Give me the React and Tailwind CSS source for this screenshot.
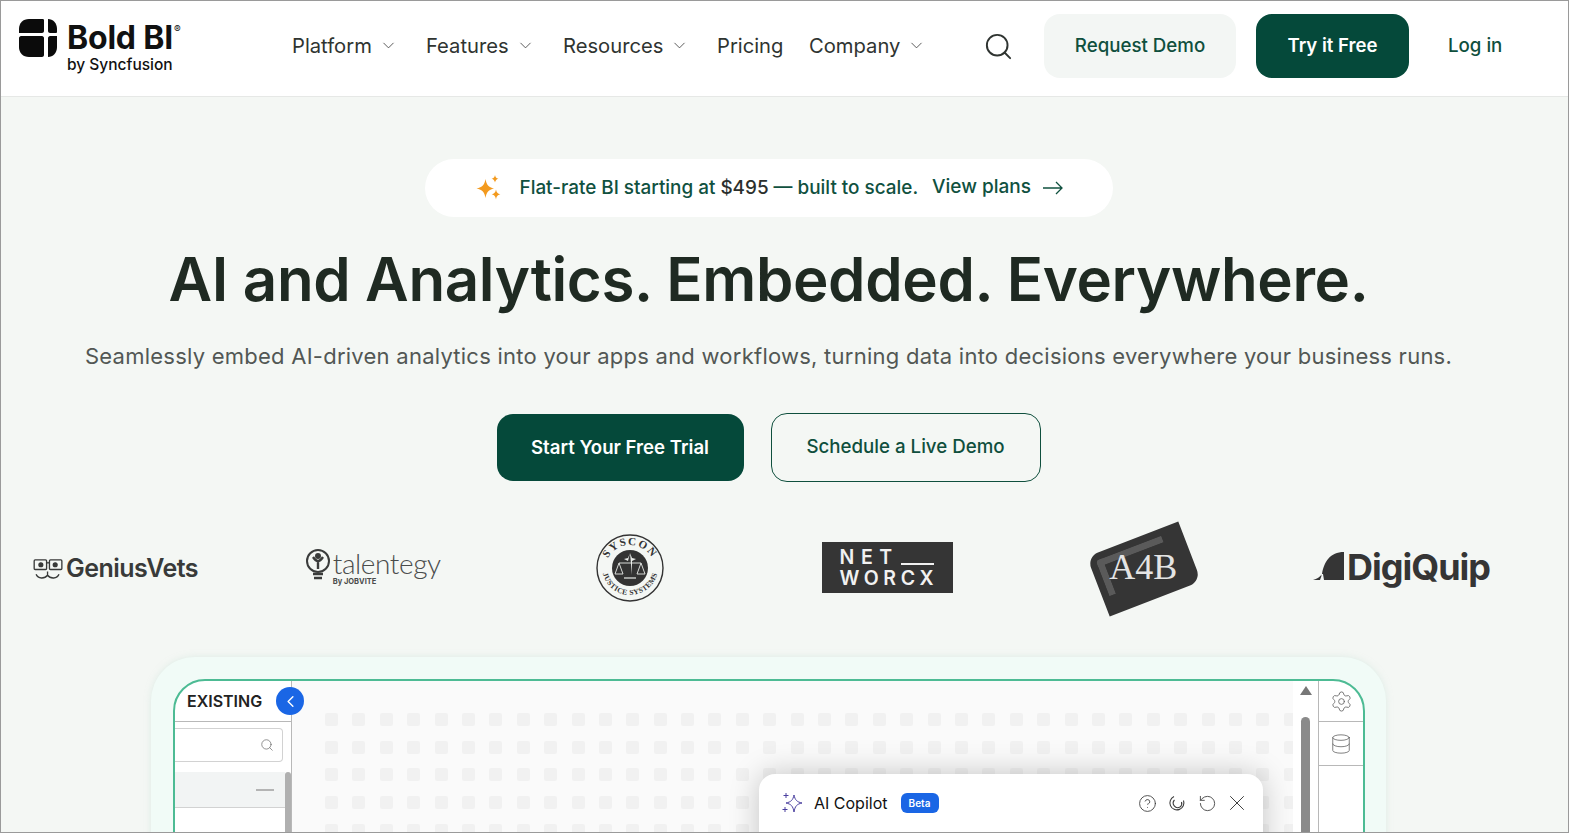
import { ChevronDown, Search, ChevronLeft, Settings, Database, CircleHelp, RotateCcw, X } from "lucide-react";

const navItems = [
  { label: "Platform", caret: true, width: "w-[134px]" },
  { label: "Features", caret: true, width: "w-[137px]" },
  { label: "Resources", caret: true, width: "w-[154px]" },
  { label: "Pricing", caret: false, width: "w-[92px]" },
  { label: "Company", caret: true, width: "w-[174px]" },
];

function BoldLogo() {
  return (
    <div className="flex items-start gap-[10px]">
      <svg width="38" height="38" viewBox="0 0 38 38" fill="#0b0b0b" className="mt-[1px]">
        <path d="M10 0h14c1 0 1 1 1 2v10c0 1-1 2-2 2H0v-4C0 4 4 0 10 0z" />
        <path d="M29 0c5 0 9 4 9 10v3c0 1-1 1-2 1h-5c-1 0-2-1-2-2z" />
        <path d="M2 17h21c1 0 2 1 2 2v17c0 1-1 2-2 2H10c-6 0-10-4-10-10v-9c0-1 1-2 2-2z" />
        <path d="M31 17h7v11c0 6-4 10-9 10V19c0-1 1-2 2-2z" />
      </svg>
      <div className="flex flex-col font-['Inter',sans-serif] text-[#111]">
        <div className="flex items-start h-[36px]">
          <span className="text-[32px] leading-[40px] font-bold tracking-[-0.2px]">Bold BI</span>
          <span className="text-[10px] leading-[22px] ml-[1px]">®</span>
        </div>
        <span className="text-[15.500px] leading-[20px] font-medium mt-[1px]">by Syncfusion</span>
      </div>
    </div>
  );
}

function Header() {
  return (
    <header className="h-[96px] shrink-0 bg-white border-b border-[#e6e8e6] flex items-start pt-[13px] pl-[18px] font-['Inter',sans-serif]">
      <div className="w-[273px] shrink-0 mt-[4px]">
        <BoldLogo />
      </div>
      <nav className="flex items-center text-[20.200px] text-[#2f3431] w-[691px] shrink-0 h-[64px]">
        {navItems.map((item) => (
          <div key={item.label} className={`flex items-center gap-[7px] ${item.width}`}>
            <span>{item.label}</span>
            {item.caret && <ChevronDown size={19} strokeWidth={1.1} className="text-[#444]" />}
          </div>
        ))}
      </nav>
      <div className="h-[64px] flex items-center shrink-0">
        <Search size={31} strokeWidth={1.5} className="text-[#2f3431]" />
      </div>
      <button className="ml-[30px] w-[192px] h-[64px] rounded-2xl bg-[#f3f6f4] text-[#0f4f3d] text-[18.700px] font-medium">
        Request Demo
      </button>
      <button className="ml-[20px] w-[153px] h-[64px] rounded-2xl bg-[#05493a] text-white text-[18.600px] font-semibold">
        Try it Free
      </button>
      <a className="ml-[39px] h-[64px] flex items-center text-[#0f4f3d] text-[18.700px] font-medium">Log in</a>
    </header>
  );
}

function Spark() {
  return (
    <svg width="26" height="26" viewBox="0 0 26 26" fill="#f39a1e">
      <path d="M9.500 4c1 6 3 8 8.500 9.500-5.500 1.500-7.500 3.500-8.500 9.500-1-6-3-8-9-9.500 6-1.500 8-3.500 9-9.500z" />
      <path d="M19 0c.5 2.200 1.100 3 3.400 3.800-2.300.8-2.900 1.600-3.400 3.800-.5-2.200-1.100-3-3.400-3.800 2.300-.8 2.900-1.600 3.400-3.800z" />
      <path d="M20 14.500c.6 3 1.600 4 4.400 4.800-2.800.8-3.800 1.800-4.400 5.200-.6-3.400-1.600-4.400-4.400-5.200 2.800-.8 3.800-1.800 4.400-4.800z" />
    </svg>
  );
}

function Hero() {
  return (
    <section className="flex flex-col items-center font-['Inter',sans-serif]">
      <div className="mt-[62px] w-[688px] h-[58px] rounded-full bg-white flex items-center pl-[51px]">
        <Spark />
        <span className="ml-[18px] text-[18.900px] font-medium text-[#10513f] whitespace-nowrap">
          Flat-rate BI starting at <span className="text-[#2b2f2d]">$495</span> — built to scale.
        </span>
        <span className="ml-[14px] text-[19px] font-medium text-[#10513f] -mt-[2px]">View plans</span>
        <svg width="20" height="14" viewBox="0 0 20 14" fill="none" stroke="#10513f" strokeWidth="1.300" className="ml-[12px]">
          <path d="M0 7h19M13 1l6 6-6 6" />
        </svg>
      </div>
      <h1 className="mt-[21px] text-[60px] leading-[82px] font-semibold text-[#1f2a22] whitespace-nowrap tracking-[-0.36px]">
        AI and Analytics. Embedded. Everywhere.
      </h1>
      <p className="mt-[20px] text-[22px] leading-[32px] text-[#525754] whitespace-nowrap tracking-[0.245px]">
        Seamlessly embed AI-driven analytics into your apps and workflows, turning data into decisions everywhere your business runs.
      </p>
      <div className="mt-[41px] flex items-center gap-[27px]">
        <button className="w-[247px] h-[67px] rounded-2xl bg-[#05493a] text-white text-[18.600px] font-semibold">
          Start Your Free Trial
        </button>
        <button className="w-[270px] h-[69px] rounded-2xl border border-[#0f4f3d] text-[#0f4f3d] text-[18.700px] font-medium">
          Schedule a Live Demo
        </button>
      </div>
    </section>
  );
}

function GeniusVets() {
  return (
    <div className="flex items-center gap-[2px] text-[#383a39] font-['Inter',sans-serif]">
      <svg width="31" height="21" viewBox="0 0 32 22" fill="none" stroke="#383a39" strokeWidth="1.400">
        <rect x="1" y="1" width="13" height="10" rx="1" />
        <rect x="17" y="1" width="13" height="10" rx="1" />
        <path d="M14 4h3" />
        <circle cx="8" cy="6" r="2" fill="#383a39" />
        <circle cx="23" cy="6" r="2" fill="#383a39" />
        <path d="M3 16c2 5 9 5 12 1 3 4 10 4 12-1M15 13v4" />
      </svg>
      <span className="text-[25px] font-semibold tracking-[-0.5px]">GeniusVets</span>
    </div>
  );
}

function Talentegy() {
  return (
    <div className="flex items-start gap-[1px] text-[#4a4c4b] font-['Lato',sans-serif] -mt-[4px]">
      <svg width="27" height="32" viewBox="0 0 27 32" fill="none" stroke="#3a3c3b" strokeWidth="2">
        <circle cx="13" cy="12" r="11" />
        <circle cx="13" cy="7" r="2" fill="#3a3c3b" />
        <path d="M8 8c2 3 3 4 5 4s3-1 5-4M13 12v8" strokeWidth="2.400" />
        <path d="M8 25h10M9 29h8" strokeWidth="2.400" />
      </svg>
      <div className="flex flex-col -mt-[1px]">
        <span className="text-[28px] leading-[30px] font-light tracking-[-0.4px]">talentegy</span>
        <span className="text-[7.500px] leading-[9px] font-bold font-['Inter',sans-serif] -mt-[1px]">By JOBVITE</span>
      </div>
    </div>
  );
}

function Syscon() {
  return (
    <svg width="68" height="68" viewBox="0 0 68 68" className="mt-[-2px]">
      <circle cx="34" cy="34" r="33" fill="none" stroke="#333" strokeWidth="1.400" />
      <circle cx="34" cy="34" r="18" fill="#333" />
      <defs>
        <path id="sealTop" d="M9 36a25 25 0 0 1 50 0" />
        <path id="sealBottom" d="M6 33a28 28 0 0 0 56 0" />
      </defs>
      <text fontFamily="Liberation Serif, serif" fontSize="11" fontWeight="700" fill="#333" letterSpacing="1.600">
        <textPath href="#sealTop" startOffset="50%" textAnchor="middle">SYSCON</textPath>
      </text>
      <text fontFamily="Liberation Serif, serif" fontSize="7.500" fontWeight="700" fill="#333" letterSpacing="0.400">
        <textPath href="#sealBottom" startOffset="50%" textAnchor="middle">JUSTICE SYSTEMS</textPath>
      </text>
      <path d="M34 19l2 5 4 1-4 2v14M34 19l-2 5-4 1 4 2" fill="#e9ece9" />
      <path d="M23 29h22M23 29l-4 11h8zM45 29l-4 11h8z" stroke="#e9ece9" fill="none" strokeWidth="0.900" />
      <path d="M28 44h12" stroke="#e9ece9" strokeWidth="1.200" />
    </svg>
  );
}

function Networcx() {
  return (
    <div className="-mt-[3px] w-[131px] h-[51px] bg-[#353535] text-[#f1f1f1] font-['Inter',sans-serif] font-semibold text-[19.500px] leading-[21px] pl-[18px] pt-[5px]">
      <div className="flex items-end tracking-[6.500px]">
        <span>NET</span>
        <span className="ml-[2px] mb-[3px] h-[2px] w-[33px] bg-[#f1f1f1]" />
      </div>
      <div className="tracking-[4.600px]">WORCX</div>
    </div>
  );
}

function A4B() {
  return (
    <div className="-mt-[1px] relative w-[98px] h-[64px] rounded-tl-xl rounded-br-xl bg-[#353535] rotate-[-21deg] flex items-center justify-center overflow-hidden">
      <div className="absolute left-[7px] top-[7px] w-[70px] h-[38px] border-[7px] border-r-0 border-b-0 border-[#5a5a5a] rounded-tl-sm" />
      <span className="relative rotate-[21deg] font-['Liberation_Serif',serif] text-[#e4e4e4] text-[36px] -mt-[4px]">A4B</span>
    </div>
  );
}

function DigiQuip() {
  return (
    <div className="-mt-[5px] flex items-center gap-[3px] text-[#353535] font-['Inter',sans-serif]">
      <svg width="31" height="28" viewBox="0 0 31 28" fill="#353535" className="mt-[-2px]">
        <path d="M31 0v28H0c4-1 7-3 9-6C11 10 17 0 31 0z" />
        <path d="M8 22c1 2 0 3-1 6h4l-1-6z" fill="#f3f6f4" />
      </svg>
      <span className="text-[36px] leading-[38px] font-bold tracking-[-1px]">DigiQuip</span>
    </div>
  );
}

function LogoRow() {
  const logos = [<GeniusVets />, <Talentegy />, <Syscon />, <Networcx />, <A4B />, <DigiQuip />];
  return (
    <div className="mt-[37px] h-[100px] flex items-center justify-center pr-[20px]">
      {logos.map((logo, idx) => (
        <div key={idx} className="w-[257.200px] shrink-0 flex items-center justify-center">
          {logo}
        </div>
      ))}
    </div>
  );
}

function Copilot() {
  return (
    <div className="absolute left-[584px] top-[93px] w-[504px] h-[120px] bg-white rounded-t-[16px] shadow-[0_0_30px_rgba(0,0,0,0.22)] flex items-start pl-[23px] pr-[11px] pt-[18px] font-['Inter',sans-serif]">
      <svg width="22" height="22" viewBox="0 0 22 22" fill="none" stroke="#4a3f9f" strokeWidth="1">
        <path d="M12 3c1 5 3 7 8 8-5 1-7 3-8 9-1-6-3-8-8-9 5-1 7-3 8-8z" />
        <path d="M4 1v5M1.500 3.500h5M3 15v5M.5 17.500h5" />
      </svg>
      <span className="ml-[10px] text-[16px] leading-[22px] text-[#111]">AI Copilot</span>
      <span className="ml-[13px] mt-[1px] w-[38px] h-[20px] rounded-[6px] bg-[#1a66e5] text-white text-[10px] leading-[20px] text-center font-semibold">
        Beta
      </span>
      <div className="ml-auto flex items-center text-[#3c3c3c] h-[22px]">
        <div className="w-[30px] flex justify-center">
          <CircleHelp size={19} strokeWidth={1.1} />
        </div>
        <div className="w-[30px] flex justify-center">
          <svg width="18" height="18" viewBox="0 0 18 18" fill="none" stroke="currentColor" strokeWidth="1.100">
            <path d="M6 2.500a7 7 0 1 0 9.500 4M6.500 6a4.500 4.500 0 0 0 5.500 7 4.500 4.500 0 0 0 1.500-5" />
          </svg>
        </div>
        <div className="w-[30px] flex justify-center">
          <RotateCcw size={19} strokeWidth={1.1} />
        </div>
        <div className="w-[30px] flex justify-center">
          <X size={26} strokeWidth={0.9} />
        </div>
      </div>
    </div>
  );
}

function Dashboard() {
  const dots = Array.from({ length: 6 * 36 });
  return (
    <div className="mt-[38px] mx-auto w-[1235px] h-[300px] rounded-t-[44px] bg-[#f1fbf7] shadow-[0_0_6px_rgba(200,225,215,0.5)] pl-[22px] pr-[21px] pt-[22px]">
      <div className="relative h-[300px] rounded-t-[32px] border-2 border-[#4dbb94] bg-white overflow-hidden flex font-['Inter',sans-serif]">
        <aside className="w-[117px] shrink-0 border-r border-[#b8b8b8] flex flex-col">
          <div className="h-[41px] border-b border-[#b8b8b8] pl-[12px] flex items-center text-[16px] font-semibold text-[#222]">
            EXISTING
          </div>
          <div className="mt-[6px] mr-[8px] h-[34px] border border-[#d2d2d2] border-l-0 rounded-r-[4px] flex items-center justify-end pr-[8px]">
            <Search size={14} strokeWidth={1.2} className="text-[#666]" />
          </div>
          <div className="flex mt-[10px]">
            <div className="flex-1 h-[36px] bg-[#f2f4f4] border-b border-[#d2d2d2] flex items-center justify-end pr-[11px]">
              <span className="w-[18px] h-[2px] bg-[#b4b4b4]" />
            </div>
            <div className="w-[6px] h-[60px] bg-[#b0b0b0] rounded-t-sm" />
          </div>
        </aside>
        <div className="absolute left-[101px] top-[6px] w-[28px] h-[28px] rounded-full bg-[#1a66e5] flex items-center justify-center">
          <ChevronLeft size={19} strokeWidth={1.8} className="text-white" />
        </div>
        <div className="w-[1001px] shrink-0 bg-[#fafafa] pl-[33px] pt-[32px] overflow-hidden">
          <div className="grid grid-cols-[repeat(36,13px)] gap-x-[14.400px] gap-y-[14.700px]">
            {dots.map((_, idx) => (
              <div key={idx} className="w-[13px] h-[13px] rounded-[2px] bg-[#f1f1f1]" />
            ))}
          </div>
        </div>
        <div className="w-[25px] shrink-0 bg-white flex flex-col items-center pt-[5px]">
          <div className="w-0 h-0 border-x-[6px] border-x-transparent border-b-[9px] border-b-[#777]" />
          <div className="mt-[22px] w-[9px] h-[200px] rounded-t-full bg-[#8a8a8a]" />
        </div>
        <aside className="flex-1 border-l border-[#b8b8b8] flex flex-col text-[#666]">
          <div className="h-[41px] border-b border-[#b8b8b8] flex items-center justify-center">
            <Settings size={23} strokeWidth={0.9} />
          </div>
          <div className="h-[44px] border-b border-[#b8b8b8] flex items-center justify-center">
            <Database size={22} strokeWidth={0.9} />
          </div>
        </aside>
        <Copilot />
      </div>
    </div>
  );
}

export default function App() {
  return (
    <div className="h-[833px] w-[1569px] overflow-hidden border border-[#9a9a9a] bg-[#f4f7f4] flex flex-col">
      <Header />
      <main className="w-[1535px]">
        <Hero />
        <LogoRow />
        <Dashboard />
      </main>
    </div>
  );
}
